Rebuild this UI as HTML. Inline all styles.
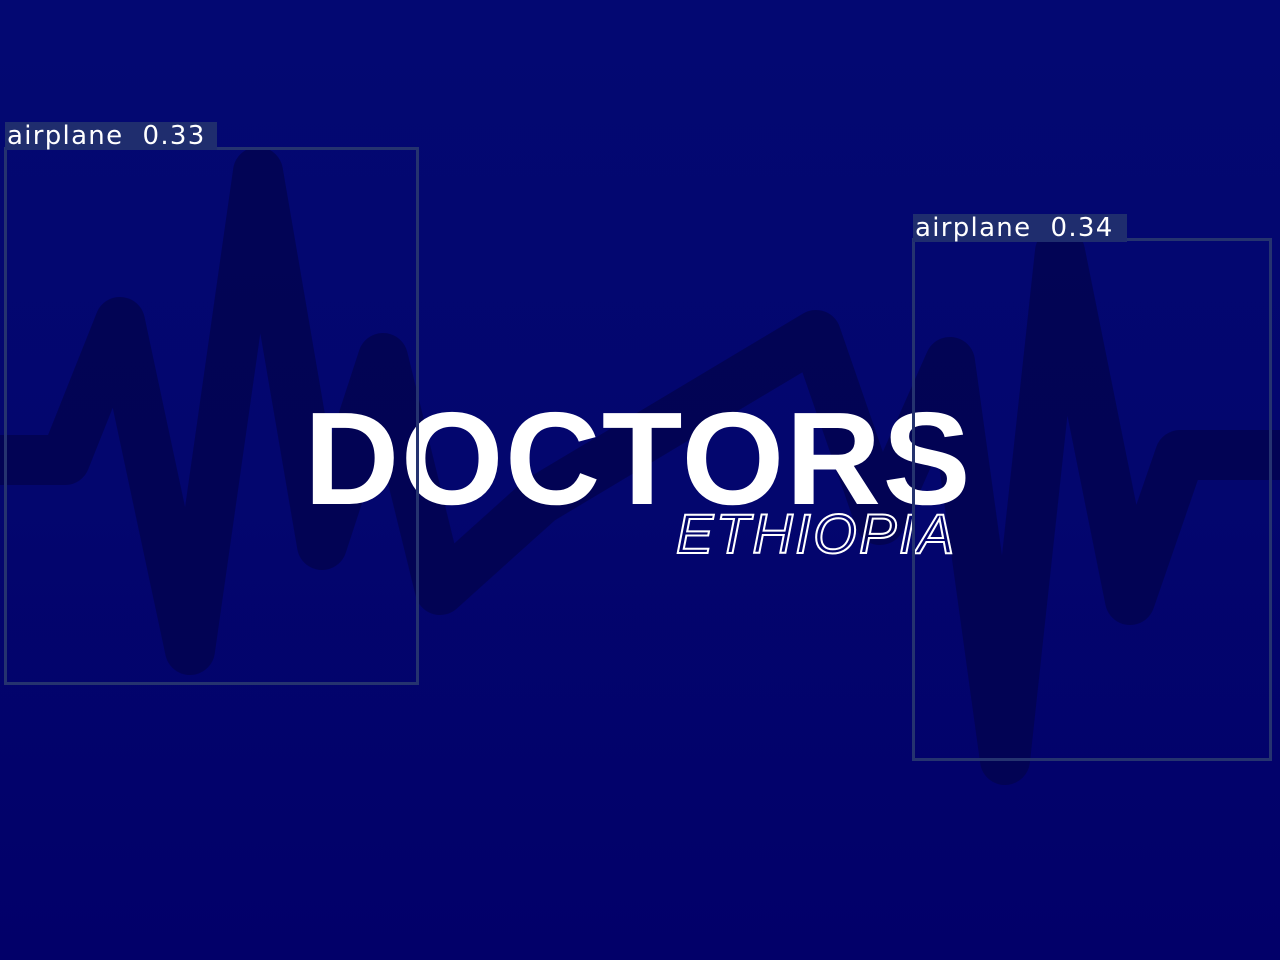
<!DOCTYPE html>
<html><head><meta charset="utf-8"><style>
html,body{margin:0;padding:0}
body{width:1280px;height:960px;overflow:hidden;position:relative;background:linear-gradient(#030872,#03066e 50%,#020069);font-family:"Liberation Sans",sans-serif}
svg{position:absolute;left:0;top:0}
.box{position:absolute;border:3px solid #25336f;box-sizing:border-box}
.lbl{position:absolute;background:#1f2d6e;color:#fff;font-family:"DejaVu Sans",sans-serif;font-size:26px;line-height:28px;height:28px;padding-left:2px;white-space:pre;letter-spacing:1.3px;overflow:hidden}
.doc{position:absolute;left:304px;top:389px;font-size:132px;font-weight:bold;color:#fff;line-height:140px;letter-spacing:1.5px}
.eth{position:absolute;left:676px;top:504px;font-size:56px;font-style:italic;color:transparent;-webkit-text-stroke:2px #fff;line-height:60px;letter-spacing:2.4px}
</style></head><body>
<svg width="1280" height="960"><path d="M0,460 L65,460 L120,322 L190,650 L258,172 L322,545 L383,358 L440,590 L540,500 L816,335 L880,520 L950,362 L1005,760 L1060,252 L1130,600 L1180,455 L1280,455" fill="none" stroke="#020350" stroke-width="50" stroke-linejoin="round" opacity="0.85"/></svg>
<div class="doc">DOCTORS</div>
<div class="eth">ETHIOPIA</div>
<div class="box" style="left:4px;top:147px;width:415px;height:538px"></div>
<div class="lbl" style="left:5px;top:122px;width:210px">airplane  0.33</div>
<div class="box" style="left:912px;top:238px;width:360px;height:523px"></div>
<div class="lbl" style="left:913px;top:214px;width:212px">airplane  0.34</div>
</body></html>
